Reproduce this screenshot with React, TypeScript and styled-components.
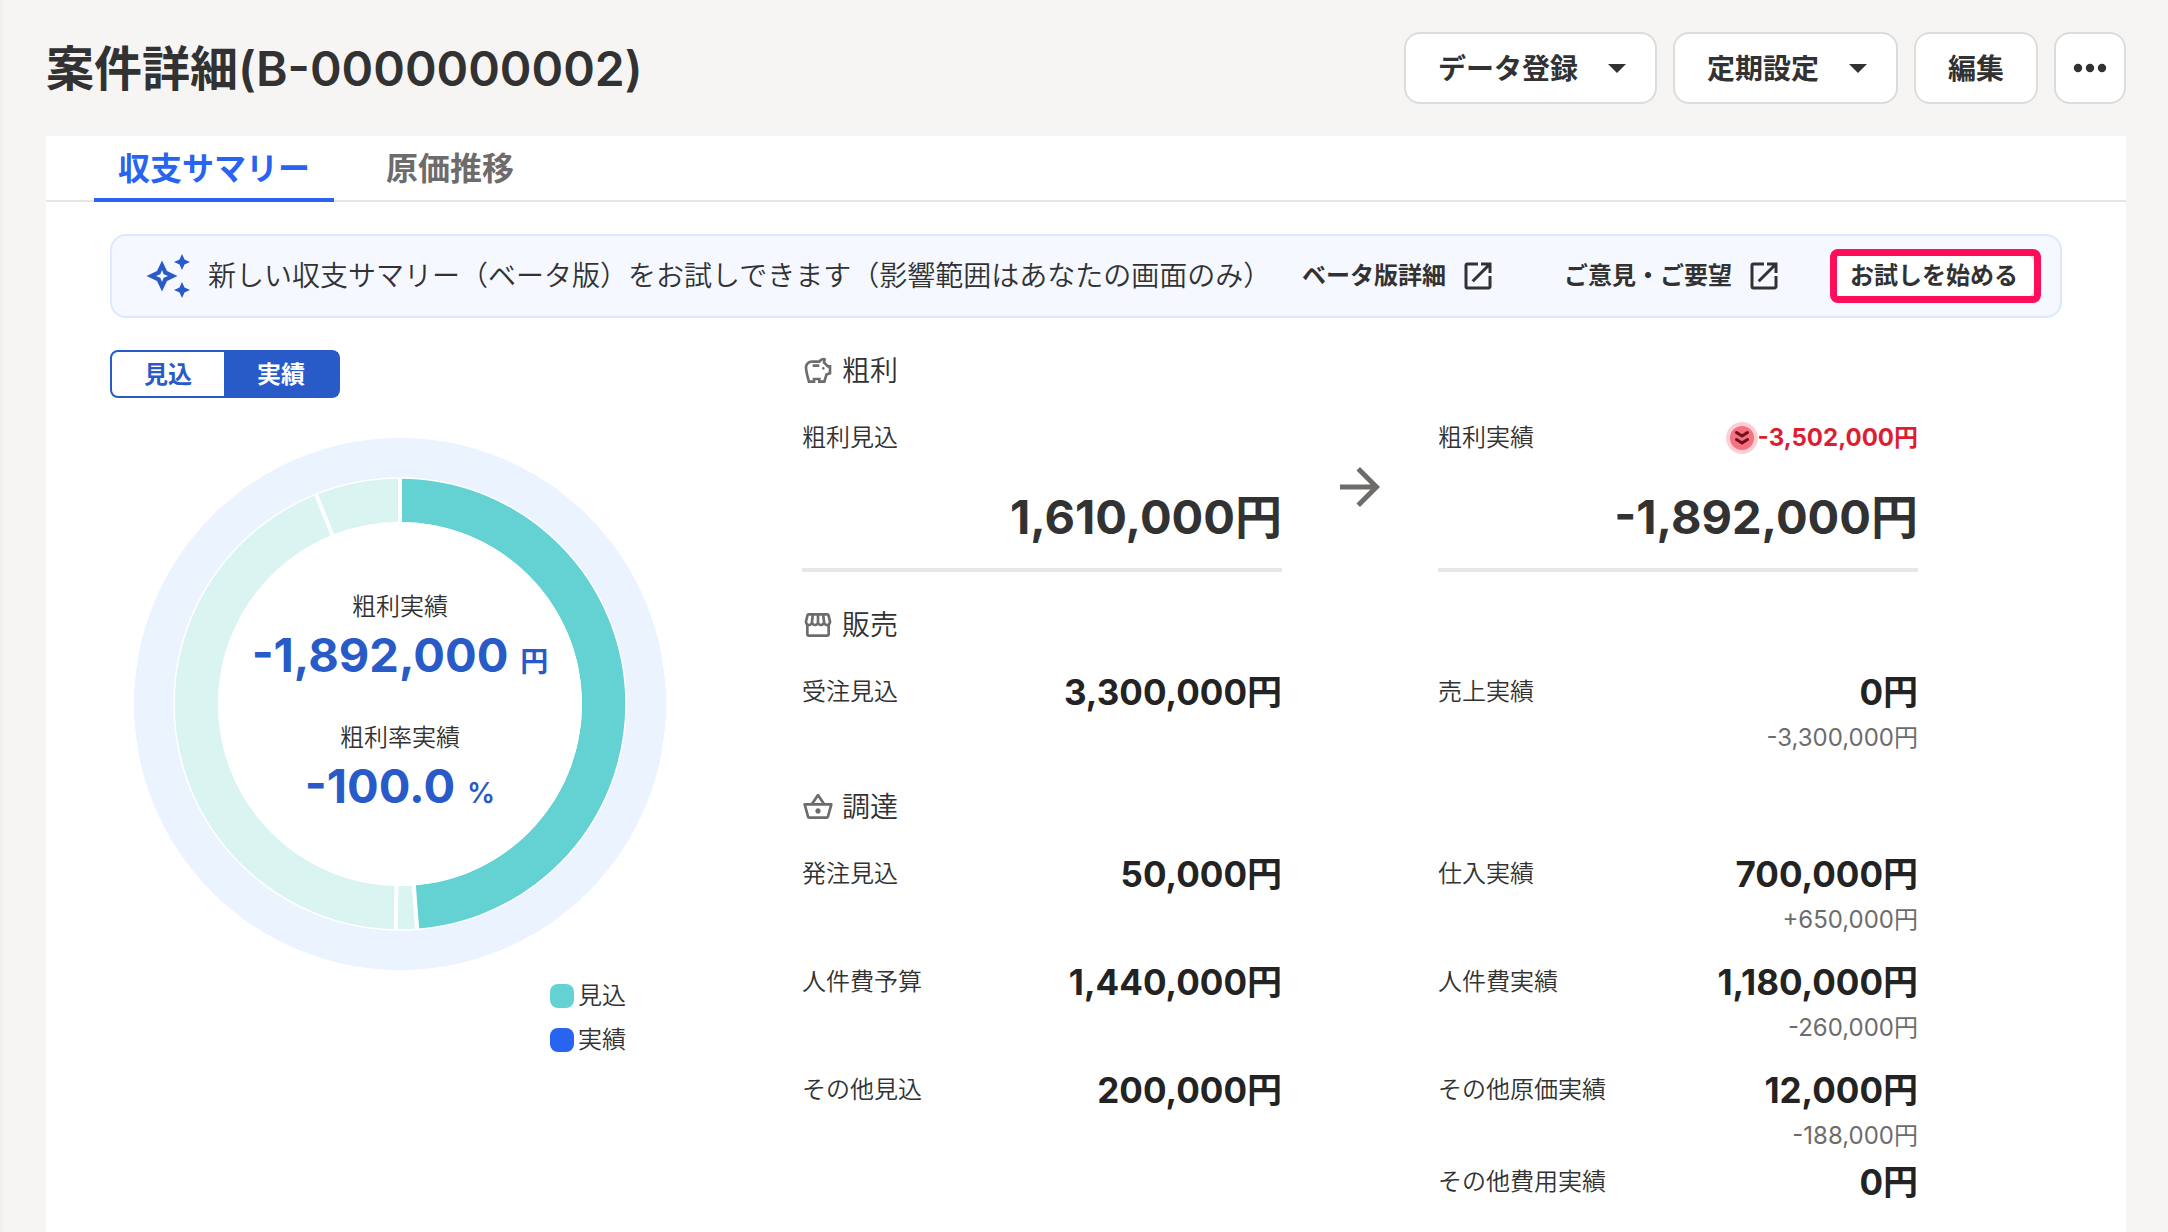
import React, { useState } from "react";
import styled, { createGlobalStyle, css } from "styled-components";
import {
  MdArrowForward,
  MdOpenInNew,
  MdOutlineSavings,
  MdOutlineShoppingBasket,
  MdOutlineStorefront,
} from "react-icons/md";

const color = {
  page: "#f7f5f4",
  text: "#323232",
  strong: "#232323",
  muted: "#6e6c6b",
  line: "#e6e6e6",
  border: "#dcdcdc",
  primary: "#285ac8",
  active: "#2864f0",
  bannerBg: "#f5f8ff",
  bannerLine: "#dce8ff",
  halo: "#ebf3ff",
  teal: "#64d2d2",
  tealPale: "#daf4f2",
  danger: "#dc1e32",
  mark: "#ff0d5a",
};

const GlobalStyle = createGlobalStyle`
  *, *::before, *::after { box-sizing: border-box; }
  body {
    margin: 0;
    background: ${color.page};
    color: ${color.text};
    font-family: Inter, "Noto Sans CJK JP", sans-serif;
    font-size: 24px;
    line-height: 36px;
  }
  button { font: inherit; color: inherit; cursor: pointer; }
  h1, h2, p, dl, dd, dt, ul { margin: 0; padding: 0; }
  dt, li { font-weight: 350; }
`;

const Page = styled.div`
  display: flex;
  flex-direction: column;
  min-height: 100vh;
  padding: 0 42px 0 46px;
  box-shadow: inset 6px 0 4px -4px #efedec;
`;

const Header = styled.header`
  display: flex;
  align-items: center;
  justify-content: space-between;
  padding: 32px 0;
`;

const Title = styled.h1`
  padding-top: 2px;
  font-size: 48px;
  line-height: 70px;
  font-weight: 600;
`;

const Actions = styled.div`
  display: flex;
  gap: 16px;
`;

const ActionButton = styled.button<{ $square?: boolean }>`
  display: flex;
  align-items: center;
  justify-content: center;
  gap: 30px;
  height: 72px;
  min-width: 72px;
  padding: 0 ${(p) => (p.$square ? 0 : 32)}px;
  border: 2px solid ${color.border};
  border-radius: 16px;
  background: #fff;
  font-size: 28px;
  line-height: 42px;
  font-weight: 700;
`;

const ButtonText = styled.span`
  padding-top: 2px;
`;

const CaretIcon = styled.svg`
  margin-right: -3px;
`;

const Card = styled.main`
  flex: 1;
  background: #fff;
`;

const Tabs = styled.div`
  display: flex;
  gap: 28px;
  padding: 0 48px;
  box-shadow: inset 0 -2px 0 ${color.line};
`;

const Tab = styled.button<{ $active?: boolean }>`
  height: 66px;
  padding: 4px 24px 0;
  border: 0;
  border-bottom: 4px solid ${(p) => (p.$active ? color.active : "transparent")};
  background: none;
  color: ${(p) => (p.$active ? color.active : color.muted)};
  font-size: 32px;
  line-height: 48px;
  font-weight: 700;
`;

const Content = styled.div`
  padding: 32px 64px;
`;

const Banner = styled.section`
  display: flex;
  align-items: center;
  height: 84px;
  padding: 0 24px 0 32px;
  border: 2px solid ${color.bannerLine};
  border-radius: 16px;
  background: ${color.bannerBg};
`;

const BannerText = styled.p`
  flex: 1;
  padding-left: 16px;
  font-size: 28px;
  line-height: 42px;
  font-weight: 350;
  white-space: nowrap;
`;

const BannerLink = styled.a`
  display: flex;
  align-items: center;
  gap: 14px;
  margin-right: 68px;
  color: inherit;
  font-weight: 700;
  text-decoration: none;
  white-space: nowrap;

  &:last-of-type { margin-right: 50px; }
`;

const TrialButton = styled.button`
  position: relative;
  height: 48px;
  padding: 0 16px;
  border: 2px solid ${color.border};
  border-radius: 12px;
  background: #fff;
  font-weight: 700;
  white-space: nowrap;

  &::after {
    content: "";
    position: absolute;
    inset: -5px -7px -5px -4px;
    border: 7px solid ${color.mark};
    border-radius: 8px;
  }
`;

const Summary = styled.div`
  display: grid;
  grid-template-columns: minmax(0, 580px) minmax(0, 1116px);
  column-gap: 112px;
  padding-top: 32px;
`;

const Overview = styled.section`
  display: flex;
  flex-direction: column;
  align-items: center;
`;

const Segmented = styled.div`
  display: flex;
  align-self: flex-start;
  border: 2px solid ${color.primary};
  border-radius: 8px;
`;

const Segment = styled.label<{ $on: boolean }>`
  width: ${(p) => (p.$on ? 114 : 112)}px;
  padding-top: 2px;
  line-height: 42px;
  text-align: center;
  font-weight: 700;
  cursor: pointer;
  color: ${(p) => (p.$on ? "#fff" : color.primary)};
  background: ${(p) => (p.$on ? color.primary : "transparent")};
`;

const HiddenRadio = styled.input`
  position: absolute;
  opacity: 0;
  pointer-events: none;
`;

const Chart = styled.div`
  display: grid;
  place-items: center;
  margin-top: 40px;

  > * { grid-area: 1 / 1; }
`;

const Readout = styled.dl`
  display: flex;
  flex-direction: column;
  gap: 28px;
  padding-top: 4px;
  text-align: center;
`;

const ReadoutValue = styled.dd`
  color: ${color.primary};
  font-size: 47px;
  line-height: 60px;
  font-weight: 700;
`;

const Unit = styled.span`
  margin-left: 12px;
  font-size: 28px;
  font-weight: 600;
`;

const Legend = styled.ul`
  display: flex;
  flex-direction: column;
  align-self: flex-end;
  gap: 8px;
  margin-top: 8px;
  padding-right: 64px;
  list-style: none;
`;

const LegendItem = styled.li`
  display: flex;
  align-items: center;
  gap: 4px;
`;

const Swatch = styled.span<{ $fill: string }>`
  width: 24px;
  height: 24px;
  border-radius: 8px;
  background: ${(p) => p.$fill};
`;

const Figures = styled.div`
  display: flex;
  flex-direction: column;
  gap: 30px;
`;

const Group = styled.section`
  display: flex;
  flex-direction: column;
  gap: 18px;

  &:first-child { padding-bottom: 2px; }
`;

const GroupTitle = styled.h2`
  display: flex;
  align-items: center;
  gap: 8px;
  font-size: 28px;
  line-height: 42px;
  font-weight: 350;

  svg { color: ${color.muted}; }
`;

const Rows = styled.div`
  display: flex;
  flex-direction: column;
  gap: 16px;
`;

const Pair = styled.div`
  display: grid;
  grid-template-columns: 1fr 156px 1fr;
`;

const ArrowCell = styled.div`
  display: flex;
  align-items: center;
  justify-content: center;
  padding-bottom: 8px;
  color: ${color.muted};
`;

const Side = styled.dl<{ $end?: boolean }>`
  ${(p) => p.$end && css`grid-column: 3;`}
`;

const Entry = styled.div`
  display: flex;
  justify-content: space-between;
  line-height: 56px;
`;

const Amount = styled.dd`
  color: ${color.strong};
  font-size: 35px;
  font-weight: 700;
`;

const Difference = styled.dd`
  color: ${color.muted};
  text-align: right;
  line-height: 36px;
`;

const ProfitSide = styled.dl`
  padding-bottom: 15px;
  border-bottom: 4px solid #e8e7e7;
`;

const ProfitAmount = styled.dd`
  margin-top: 15px;
  font-size: 47px;
  line-height: 72px;
  font-weight: 700;
  text-align: right;
`;

const Drop = styled.dd`
  display: flex;
  align-items: center;
  color: ${color.danger};
  font-weight: 700;
`;

const Caret = () => (
  <CaretIcon width="18" height="9" viewBox="0 0 18 9" aria-hidden="true">
    <path d="M0 0h18L9 9z" fill="currentColor" />
  </CaretIcon>
);

const Dots = () => (
  <svg width="34" height="10" viewBox="0 0 34 10" aria-hidden="true" fill="currentColor">
    <circle cx="5" cy="5" r="4.2" />
    <circle cx="17" cy="5" r="4.2" />
    <circle cx="29" cy="5" r="4.2" />
  </svg>
);

const Sparkles = () => (
  <svg width="48" height="48" viewBox="0 0 48 48" aria-hidden="true" fill={color.primary}>
    <path
      fillRule="evenodd"
      d="M18 8.500l5 10.500 10.500 5L23 29l-5 10.500L13 29 2.500 24 13 19zM18 18l-1.700 4.300L12 24l4.300 1.700L18 30l1.700-4.300L24 24l-4.300-1.700z"
    />
    <path d="M38 2l2.500 5.500L46 10l-5.500 2.500L38 18l-2.500-5.500L30 10l5.500-2.500z" />
    <path d="M38 30l2.500 5.500L46 38l-5.500 2.500L38 46l-2.500-5.500L30 38l5.500-2.500z" />
  </svg>
);

const DropBadge = () => (
  <svg width="32" height="32" viewBox="0 0 32 32" aria-hidden="true">
    <circle cx="16" cy="16" r="16" fill="#fccfd6" />
    <circle cx="16" cy="16" r="12" fill="#f5717f" />
    <path
      d="M10.500 10.500l5.500 3.500 5.500-3.500M10.500 17.500L16 21l5.500-3.500"
      fill="none"
      stroke="#6e0f19"
      strokeWidth="3"
      strokeLinecap="round"
      strokeLinejoin="round"
    />
  </svg>
);

const slices = [
  { value: 1610000, fill: color.teal },
  { value: 50000, fill: color.tealPale },
  { value: 1440000, fill: color.tealPale },
  { value: 200000, fill: color.tealPale },
];

const polar = (radius: number, ratio: number) => {
  const angle = ratio * 2 * Math.PI;
  return `${266 + radius * Math.sin(angle)} ${266 - radius * Math.cos(angle)}`;
};

const slicePath = (from: number, to: number) => {
  const large = to - from > 0.5 ? 1 : 0;
  return `M${polar(226, from)}A226 226 0 ${large} 1 ${polar(226, to)}L${polar(182, to)}A182 182 0 ${large} 0 ${polar(182, from)}Z`;
};

function Donut() {
  const total = slices.reduce((sum, s) => sum + s.value, 0);
  let at = 0;
  return (
    <svg width="532" height="532" viewBox="0 0 532 532" aria-hidden="true">
      <circle cx="266" cy="266" r="266" fill={color.halo} />
      <circle cx="266" cy="266" r="226" fill="#fff" />
      {slices.map((s, i) => {
        const from = at / total;
        at += s.value;
        return <path key={i} d={slicePath(from, at / total)} fill={s.fill} />;
      })}
      {slices.map((s, i) => {
        const start = slices.slice(0, i).reduce((sum, x) => sum + x.value, 0) / total;
        return <path key={i} d={`M${polar(181, start)}L${polar(226, start)}`} stroke="#fff" strokeWidth="4" />;
      })}
      <circle cx="266" cy="266" r="226" fill="none" stroke="#fff" strokeWidth="1.500" />
      <circle cx="266" cy="266" r="182" fill="#fff" />
    </svg>
  );
}

type Item = { label: string; amount: string; diff?: string };

const sales: [Item[], Item[]][] = [
  [
    [{ label: "受注見込", amount: "3,300,000円" }],
    [{ label: "売上実績", amount: "0円", diff: "-3,300,000円" }],
  ],
];

const procurement: [Item[], Item[]][] = [
  [
    [{ label: "発注見込", amount: "50,000円" }],
    [{ label: "仕入実績", amount: "700,000円", diff: "+650,000円" }],
  ],
  [
    [{ label: "人件費予算", amount: "1,440,000円" }],
    [{ label: "人件費実績", amount: "1,180,000円", diff: "-260,000円" }],
  ],
  [
    [{ label: "その他見込", amount: "200,000円" }],
    [
      { label: "その他原価実績", amount: "12,000円", diff: "-188,000円" },
      { label: "その他費用実績", amount: "0円" },
    ],
  ],
];

function Items({ items, end }: { items: Item[]; end?: boolean }) {
  return (
    <Side $end={end}>
      {items.map((item) => (
        <div key={item.label}>
          <Entry>
            <dt>{item.label}</dt>
            <Amount>{item.amount}</Amount>
          </Entry>
          {item.diff && <Difference as="div">{item.diff}</Difference>}
        </div>
      ))}
    </Side>
  );
}

function FigureRows({ rows }: { rows: [Item[], Item[]][] }) {
  return (
    <Rows>
      {rows.map(([plan, actual]) => (
        <Pair key={plan[0].label}>
          <Items items={plan} />
          <Items items={actual} end />
        </Pair>
      ))}
    </Rows>
  );
}

export default function App() {
  const [mode, setMode] = useState("実績");
  return (
    <>
      <GlobalStyle />
      <Page>
        <Header>
          <Title>案件詳細(B-0000000002)</Title>
          <Actions>
            <ActionButton type="button" aria-haspopup="menu"><ButtonText>データ登録</ButtonText><Caret /></ActionButton>
            <ActionButton type="button" aria-haspopup="menu"><ButtonText>定期設定</ButtonText><Caret /></ActionButton>
            <ActionButton type="button"><ButtonText>編集</ButtonText></ActionButton>
            <ActionButton type="button" $square aria-label="その他の操作"><Dots /></ActionButton>
          </Actions>
        </Header>
        <Card>
          <Tabs role="tablist">
            <Tab type="button" role="tab" aria-selected $active>収支サマリー</Tab>
            <Tab type="button" role="tab" aria-selected={false}>原価推移</Tab>
          </Tabs>
          <Content>
            <Banner>
              <Sparkles />
              <BannerText>新しい収支サマリー（ベータ版）をお試しできます（影響範囲はあなたの画面のみ）</BannerText>
              <BannerLink href="#beta">ベータ版詳細<MdOpenInNew size={36} /></BannerLink>
              <BannerLink href="#feedback">ご意見・ご要望<MdOpenInNew size={36} /></BannerLink>
              <TrialButton type="button">お試しを始める</TrialButton>
            </Banner>
            <Summary>
              <Overview>
                <Segmented role="radiogroup">
                  {["見込", "実績"].map((name) => (
                    <Segment key={name} $on={mode === name}>
                      <HiddenRadio
                        type="radio"
                        name="mode"
                        checked={mode === name}
                        onChange={() => setMode(name)}
                      />
                      {name}
                    </Segment>
                  ))}
                </Segmented>
                <Chart>
                  <Donut />
                  <Readout>
                    <div>
                      <dt>粗利実績</dt>
                      <ReadoutValue>-1,892,000<Unit>円</Unit></ReadoutValue>
                    </div>
                    <div>
                      <dt>粗利率実績</dt>
                      <ReadoutValue>-100.0<Unit>%</Unit></ReadoutValue>
                    </div>
                  </Readout>
                </Chart>
                <Legend>
                  <LegendItem><Swatch $fill={color.teal} />見込</LegendItem>
                  <LegendItem><Swatch $fill={color.active} />実績</LegendItem>
                </Legend>
              </Overview>
              <Figures>
                <Group>
                  <GroupTitle><MdOutlineSavings size={32} />粗利</GroupTitle>
                  <Pair>
                    <ProfitSide>
                      <Entry><dt>粗利見込</dt></Entry>
                      <ProfitAmount>1,610,000円</ProfitAmount>
                    </ProfitSide>
                    <ArrowCell><MdArrowForward size={60} /></ArrowCell>
                    <ProfitSide>
                      <Entry>
                        <dt>粗利実績</dt>
                        <Drop><DropBadge />-3,502,000円</Drop>
                      </Entry>
                      <ProfitAmount>-1,892,000円</ProfitAmount>
                    </ProfitSide>
                  </Pair>
                </Group>
                <Group>
                  <GroupTitle><MdOutlineStorefront size={32} />販売</GroupTitle>
                  <FigureRows rows={sales} />
                </Group>
                <Group>
                  <GroupTitle><MdOutlineShoppingBasket size={32} />調達</GroupTitle>
                  <FigureRows rows={procurement} />
                </Group>
              </Figures>
            </Summary>
          </Content>
        </Card>
      </Page>
    </>
  );
}
